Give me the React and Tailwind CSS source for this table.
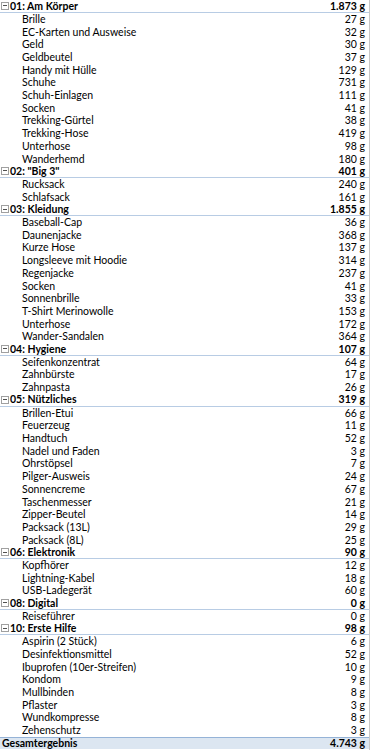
import React from "react";

const groups = [
  {
    name: "01: Am Körper",
    total: "1.873",
    items: [
      ["Brille", 27],
      ["EC-Karten und Ausweise", 32],
      ["Geld", 30],
      ["Geldbeutel", 37],
      ["Handy mit Hülle", 129],
      ["Schuhe", 731],
      ["Schuh-Einlagen", 111],
      ["Socken", 41],
      ["Trekking-Gürtel", 38],
      ["Trekking-Hose", 419],
      ["Unterhose", 98],
      ["Wanderhemd", 180],
    ],
  },
  {
    name: '02: "Big 3"',
    total: "401",
    items: [
      ["Rucksack", 240],
      ["Schlafsack", 161],
    ],
  },
  {
    name: "03: Kleidung",
    total: "1.855",
    items: [
      ["Baseball-Cap", 36],
      ["Daunenjacke", 368],
      ["Kurze Hose", 137],
      ["Longsleeve mit Hoodie", 314],
      ["Regenjacke", 237],
      ["Socken", 41],
      ["Sonnenbrille", 33],
      ["T-Shirt Merinowolle", 153],
      ["Unterhose", 172],
      ["Wander-Sandalen", 364],
    ],
  },
  {
    name: "04: Hygiene",
    total: "107",
    items: [
      ["Seifenkonzentrat", 64],
      ["Zahnbürste", 17],
      ["Zahnpasta", 26],
    ],
  },
  {
    name: "05: Nützliches",
    total: "319",
    items: [
      ["Brillen-Etui", 66],
      ["Feuerzeug", 11],
      ["Handtuch", 52],
      ["Nadel und Faden", 3],
      ["Ohrstöpsel", 7],
      ["Pilger-Ausweis", 24],
      ["Sonnencreme", 67],
      ["Taschenmesser", 21],
      ["Zipper-Beutel", 14],
      ["Packsack (13L)", 29],
      ["Packsack (8L)", 25],
    ],
  },
  {
    name: "06: Elektronik",
    total: "90",
    items: [
      ["Kopfhörer", 12],
      ["Lightning-Kabel", 18],
      ["USB-Ladegerät", 60],
    ],
  },
  {
    name: "08: Digital",
    total: "0",
    items: [["Reiseführer", 0]],
  },
  {
    name: "10: Erste Hilfe",
    total: "98",
    items: [
      ["Aspirin (2 Stück)", 6],
      ["Desinfektionsmittel", 52],
      ["Ibuprofen (10er-Streifen)", 10],
      ["Kondom", 9],
      ["Mullbinden", 8],
      ["Pflaster", 3],
      ["Wundkompresse", 8],
      ["Zehenschutz", 3],
    ],
  },
];

const MinusBox = () => (
  <span className="w-[8px] h-[8px] border border-[#a0a0a0] bg-white flex items-center justify-center mr-[1px] shrink-0">
    <span className="w-[4px] h-[1px] bg-[#505050]" />
  </span>
);

const App = () => {
  return (
    <div
      className="w-[370px] h-[750px] bg-white text-black overflow-hidden border-r border-[#c8c8c8] text-[10.5px] leading-none"
      style={{ fontFamily: "Lato, 'Liberation Sans', sans-serif" }}
    >
      {groups.map((g) => (
        <div key={g.name}>
          <div className="h-[12.71px] flex items-center justify-between pl-[1px] pr-[4px] font-bold border-b border-[#b8cce4]">
            <div className="flex items-center">
              <MinusBox />
              <span>{g.name}</span>
            </div>
            <span>{g.total} g</span>
          </div>
          {g.items.map(([label, w], i) => (
            <div
              key={label + i}
              className="h-[12.71px] flex items-center justify-between pl-[22px] pr-[4px]"
            >
              <span>{label}</span>
              <span>{w} g</span>
            </div>
          ))}
        </div>
      ))}
      <div className="h-[12.71px] flex items-center justify-between pl-[2px] pr-[4px] font-bold bg-[#dce6f1] border-t border-[#95b3d7]">
        <span>Gesamtergebnis</span>
        <span>4.743 g</span>
      </div>
    </div>
  );
};

export default App;
